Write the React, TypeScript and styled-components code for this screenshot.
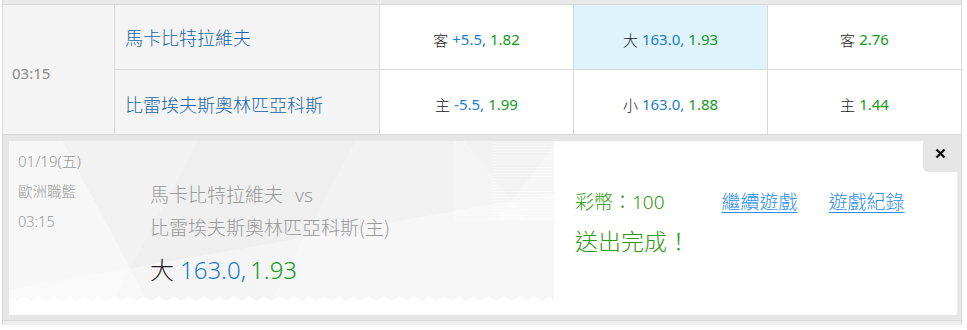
import React from "react";
import styled, { createGlobalStyle } from "styled-components";

const GlobalStyle = createGlobalStyle`
  html, body { margin: 0; padding: 0; background: #ffffff; }
  body { font-family: "Noto Sans", "Noto Sans CJK TC", sans-serif; }
`;

const BORDER = "#d9d9d9";
const GRAY_BG = "#e6e6e6";

const Page = styled.div`
  width: 960px;
  margin-left: 2px;
`;

const TopStrip = styled.div`
  height: 4px;
  background: #e9e9e9;
  border-left: 1px solid ${BORDER};
  border-right: 1px solid ${BORDER};
`;

const Table = styled.div`
  display: grid;
  grid-template-columns: 111px 264px repeat(3, 1fr);
  grid-template-rows: 64px 64px;
  gap: 1px;
  background: ${BORDER};
  border: 1px solid ${BORDER};
`;

const TimeCell = styled.div`
  grid-row: 1 / span 2;
  background: #f4f4f4;
  color: #8a8a8a;
  font-size: 15px;
  display: flex;
  align-items: center;
  padding-left: 9px;
  padding-top: 6px;
`;

const TeamCell = styled.div<{ $row: number }>`
  background: #f4f4f4;
  color: #1666a8;
  font-family: "Noto Sans CJK TC", sans-serif;
  font-weight: 300;
  font-size: 18px;
  display: flex;
  align-items: center;
  padding-left: 10px;
  padding-top: ${(p) => (p.$row === 1 ? "0" : "4px")};
`;

const OddsCell = styled.div<{ $active?: boolean }>`
  background: ${(p) => (p.$active ? "#def3fc" : "#ffffff")};
  display: flex;
  align-items: center;
  justify-content: center;
  font-size: 15px;
  padding-top: 4px;
`;

const Label = styled.span`
  color: #222;
  font-family: "Noto Sans CJK TC", sans-serif;
  font-weight: 300;
  margin-right: 4px;
`;

const Line = styled.span`
  color: #1a7dcc;
  margin-right: 4px;
`;

const Price = styled.span`
  color: #11991a;
`;

const Detail = styled.div`
  background: ${GRAY_BG};
  border-left: 1px solid ${BORDER};
  border-right: 1px solid ${BORDER};
  border-bottom: 1px solid ${BORDER};
  padding: 6px 4px 5px 6px;
`;

const BottomStrip = styled.div`
  height: 4px;
  background: #efefef;
  border-left: 1px solid ${BORDER};
  border-right: 1px solid ${BORDER};
`;

const Panel = styled.div`
  position: relative;
  display: flex;
  height: 174px;
  background: #ffffff;
`;

const teeth = (() => {
  const pts: string[] = ["0 0", "545px 0"];
  const period = 15;
  const n = Math.ceil(545 / period);
  pts.push("545px calc(100% - 5px)");
  for (let i = n; i >= 0; i--) {
    const x = i * period;
    pts.push(`${Math.min(x + 7.5, 545)}px 100%`);
    pts.push(`${x}px calc(100% - 5px)`);
  }
  return `polygon(${pts.join(", ")})`;
})();

const Ticket = styled.div`
  width: 545px;
  flex: none;
  display: flex;
  flex-direction: column;
  padding-bottom: 14px;
  box-sizing: border-box;
`;

const TicketBody = styled.div`
  flex: 1;
  padding: 5px 0 0 9px;
  clip-path: ${teeth};
  background:
    repeating-linear-gradient(0deg, rgba(255, 255, 255, 0.4) 0 1px, transparent 1px 3px) right top / 62px 78px no-repeat,
    linear-gradient(128deg, transparent 68%, rgba(255, 255, 255, 0.25) 68%) right top / 120px 80px no-repeat,
    linear-gradient(52deg, rgba(255, 255, 255, 0.2) 45%, transparent 45%) right top / 100px 80px no-repeat,
    linear-gradient(170deg, transparent 58%, rgba(255, 255, 255, 0.35) 58%),
    linear-gradient(62deg, rgba(255, 255, 255, 0.4) 22%, transparent 22%),
    linear-gradient(118deg, transparent 30%, rgba(0, 0, 0, 0.012) 30% 55%, transparent 55%),
    #f2f2f2;
`;

const DateText = styled.div`
  color: #999;
  font-size: 15px;
  font-weight: 300;
  line-height: 30px;
`;

const MatchRow = styled.div`
  display: grid;
  grid-template-columns: 132px 1fr;
`;

const MetaCol = styled.div`
  display: flex;
  flex-direction: column;
`;

const Meta = styled.div`
  color: #999;
  font-size: 14.5px;
  line-height: 30px;
  font-weight: 300;
  font-family: "Noto Sans", "Noto Sans CJK TC", sans-serif;
`;

const TeamCol = styled.div`
  display: flex;
  flex-direction: column;
  padding-top: 2px;
`;

const TeamLine = styled.div`
  color: #9a9a9a;
  font-size: 19px;
  line-height: 31px;
  font-weight: 300;
  font-family: "Noto Sans CJK TC", sans-serif;
`;

const Vs = styled.span`
  font-family: "Noto Sans", sans-serif;
  margin-left: 12px;
`;

const Pick = styled.div`
  margin-top: 12px;
  font-size: 24px;
  font-weight: 300;
  line-height: 30px;
`;

const PickLabel = styled.span`
  color: #222;
  font-family: "Noto Sans CJK TC", sans-serif;
  margin-right: 6px;
`;

const Result = styled.div`
  flex: 1;
  padding: 46px 0 0 21px;
  display: flex;
  flex-direction: column;
  gap: 8px;
`;

const InfoRow = styled.div`
  display: flex;
  align-items: baseline;
  line-height: 28px;
`;

const Coins = styled.span`
  color: #2b9a0c;
  font-size: 19px;
  font-weight: 300;
  font-family: "Noto Sans CJK TC", sans-serif;
`;

const CoinNum = styled.span`
  font-family: "Noto Sans", sans-serif;
`;

const LinkText = styled.a<{ $gap: number }>`
  color: #2b8ef0;
  font-size: 19px;
  font-weight: 300;
  font-family: "Noto Sans CJK TC", sans-serif;
  text-decoration: underline;
  text-underline-offset: 3px;
  margin-left: ${(p) => p.$gap}px;
  cursor: pointer;
`;

const Done = styled.div`
  color: #2b9a0c;
  font-size: 23px;
  font-weight: 300;
  line-height: 32px;
  font-family: "Noto Sans CJK TC", sans-serif;
`;

const CloseTab = styled.button`
  position: absolute;
  top: 0;
  right: 0;
  width: 34px;
  height: 31px;
  border: none;
  padding: 0 0 6px 0;
  background: ${GRAY_BG};
  border-bottom-left-radius: 5px;
  display: flex;
  align-items: center;
  justify-content: center;
  cursor: pointer;
`;

const Odds = ({ label, line, price }: { label: string; line?: string; price: string }) => (
  <>
    <Label>{label}</Label>
    {line && <Line>{line}</Line>}
    <Price>{price}</Price>
  </>
);

export default function App() {
  return (
    <>
      <GlobalStyle />
      <Page>
        <TopStrip />
        <Table>
          <TimeCell>03:15</TimeCell>
          <TeamCell $row={1}>馬卡比特拉維夫</TeamCell>
          <OddsCell>
            <Odds label="客" line="+5.5," price="1.82" />
          </OddsCell>
          <OddsCell $active>
            <Odds label="大" line="163.0," price="1.93" />
          </OddsCell>
          <OddsCell>
            <Odds label="客" price="2.76" />
          </OddsCell>
          <TeamCell $row={2}>比雷埃夫斯奧林匹亞科斯</TeamCell>
          <OddsCell>
            <Odds label="主" line="-5.5," price="1.99" />
          </OddsCell>
          <OddsCell>
            <Odds label="小" line="163.0," price="1.88" />
          </OddsCell>
          <OddsCell>
            <Odds label="主" price="1.44" />
          </OddsCell>
        </Table>
        <Detail>
          <Panel>
            <Ticket>
              <TicketBody>
                <DateText>01/19(五)</DateText>
                <MatchRow>
                  <MetaCol>
                    <Meta>歐洲職籃</Meta>
                    <Meta>03:15</Meta>
                  </MetaCol>
                  <TeamCol>
                    <TeamLine>
                      馬卡比特拉維夫<Vs>vs</Vs>
                    </TeamLine>
                    <TeamLine>比雷埃夫斯奧林匹亞科斯(主)</TeamLine>
                    <Pick>
                      <PickLabel>大</PickLabel>
                      <Line>163.0,</Line>
                      <Price>1.93</Price>
                    </Pick>
                  </TeamCol>
                </MatchRow>
              </TicketBody>
            </Ticket>
            <Result>
              <InfoRow>
                <Coins>
                  彩幣：<CoinNum>100</CoinNum>
                </Coins>
                <LinkText $gap={57}>繼續遊戲</LinkText>
                <LinkText $gap={31}>遊戲紀錄</LinkText>
              </InfoRow>
              <Done>送出完成！</Done>
            </Result>
            <CloseTab aria-label="close">
              <svg width="11" height="11" viewBox="0 0 11 11">
                <path d="M1.5 1.5 L9.5 9.5 M9.5 1.5 L1.5 9.5" stroke="#111" strokeWidth="2.4" strokeLinecap="butt" />
              </svg>
            </CloseTab>
          </Panel>
        </Detail>
        <BottomStrip />
      </Page>
    </>
  );
}
